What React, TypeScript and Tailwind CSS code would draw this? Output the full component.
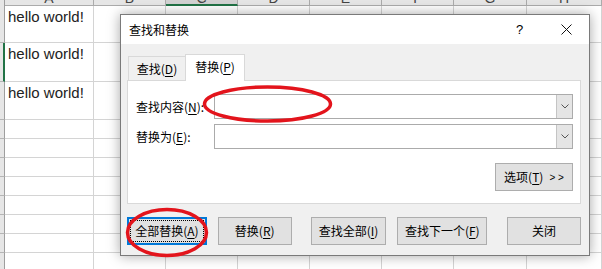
import React from "react";

const cjk = { fontFamily: '"Microsoft YaHei","Noto Sans CJK SC","Noto Sans",sans-serif' };

const cols = [
  { w: 89, l: "A" },
  { w: 72, l: "B" },
  { w: 72, l: "C", sel: true },
  { w: 72, l: "D" },
  { w: 72, l: "E" },
  { w: 72, l: "F" },
  { w: 73, l: "G" },
  { w: 75, l: "H" },
];
const rows = [37, 39, 38, 19, 19, 19, 19, 19, 19, 19, 19];
const texts = ["hello world!", "hello world!", "hello world!"];

function U({ c }: { c: string }) {
  return <span className="underline underline-offset-2">{c}</span>;
}

function Btn({ w, children, focus }: { w: number; children: React.ReactNode; focus?: boolean }) {
  if (focus) {
    return (
      <div className="h-[28px] border-2 border-[#0078d7] bg-[#e1e1e1] p-[1px]" style={{ width: w }}>
        <div className="w-full h-full border border-dotted border-black flex items-center justify-center text-[12px] text-black">
          {children}
        </div>
      </div>
    );
  }
  return (
    <div
      className="h-[28px] border border-[#adadad] bg-[#e1e1e1] flex items-center justify-center text-[12px] text-black"
      style={{ width: w }}
    >
      {children}
    </div>
  );
}

function Combo() {
  return (
    <div className="w-[359px] h-[25px] border border-[#ababab] bg-white flex justify-end">
      <div className="w-[16px] h-full bg-[#e5e5e5] border-l border-[#c4c4c4] flex items-center justify-center">
        <svg width="8" height="5" viewBox="0 0 8 5">
          <path d="M0.5 0.5 L4 4 L7.5 0.5" fill="none" stroke="#555" strokeWidth="1" />
        </svg>
      </div>
    </div>
  );
}

export default function App() {
  return (
    <div className="relative w-[602px] h-[269px] overflow-hidden bg-white" style={{ fontFamily: '"Liberation Sans",Arial,sans-serif' }}>
      {/* Spreadsheet */}
      <div className="flex flex-col">
        <div className="flex h-[6px] overflow-hidden">
          <div className="w-[5px] shrink-0 bg-[#e6e6e6] border-r border-[#9e9e9e]" />
          {cols.map((c) => (
            <div
              key={c.l}
              className={`shrink-0 h-[6px] border-r border-b relative overflow-hidden ${
                c.sel ? "bg-[#d2d2d2] border-b-2 border-b-[#217346] border-r-[#ababab]" : "bg-[#e6e6e6] border-[#ababab]"
              }`}
              style={{ width: c.w }}
            >
              <div className="absolute left-0 right-0 -top-[12px] text-center text-[14px] text-[#444]">{c.l}</div>
            </div>
          ))}
        </div>
        {rows.map((h, i) => (
          <div key={i} className="flex shrink-0" style={{ height: h }}>
            <div
              className={`w-[5px] shrink-0 bg-[#e6e6e6] border-b border-[#b5b5b5] ${
                i === 1 ? "border-r-2 border-r-[#217346]" : "border-r border-r-[#9e9e9e]"
              }`}
            />
            {cols.map((c, j) => (
              <div
                key={j}
                className="shrink-0 border-r border-b border-[#d4d4d4] text-[15px] text-[#222] pl-[3px] leading-[22px]"
                style={{ width: c.w }}
              >
                {j === 0 && texts[i] ? texts[i] : ""}
              </div>
            ))}
          </div>
        ))}
      </div>

      {/* Dialog */}
      <div
        className="absolute left-[120px] top-[14px] w-[470px] h-[242px] border border-[#7a7a7a] bg-[#f0f0f0] flex flex-col shadow-[0_0_12px_rgba(0,0,0,0.35)]"
        style={cjk}
      >
        <div className="h-[29px] bg-white flex items-center shrink-0">
          <div className="pl-[8px] text-[12px] text-black flex-1">查找和替换</div>
          <div className="text-[13px] text-black w-[12px] mr-[33px]" style={{ fontFamily: '"Liberation Sans",sans-serif' }}>?</div>
          <svg width="11" height="11" viewBox="0 0 11 11" className="mr-[17px]">
            <path d="M0.5 0.5 L10.5 10.5 M10.5 0.5 L0.5 10.5" stroke="#111" strokeWidth="1" />
          </svg>
        </div>
        <div className="flex-1 pl-[6px] pr-[8px] pt-[10px] flex flex-col">
          <div className="flex items-end h-[26px] pl-[1px]">
            <div className="w-[57px] h-[24px] border-t border-l border-[#d9d9d9] bg-[#f0f0f0] flex items-center justify-center text-[12px] text-black">
              查找(<U c="D" />)
            </div>
            <div className="w-[60px] h-[27px] -mb-px border-t border-l border-r border-[#d9d9d9] bg-white relative z-10 flex items-center justify-center text-[12px] text-black pb-[3px]">
              替换(<U c="P" />)
            </div>
          </div>
          <div className="h-[124px] border border-[#d9d9d9] bg-white pl-[8px] pr-[7px] pt-[13px] flex flex-col">
            <div className="flex items-center justify-between">
              <div className="text-[12px] text-black">
                查找内容(<U c="N" />):
              </div>
              <Combo />
            </div>
            <div className="flex items-center justify-between mt-[5px]">
              <div className="text-[12px] text-black">
                替换为(<U c="E" />):
              </div>
              <Combo />
            </div>
            <div className="flex justify-end mt-[14px]">
              <div className="w-[78px] h-[28px] border border-[#adadad] bg-[#e1e1e1] flex items-center justify-center text-[12px] text-black">
                选项(<U c="T" />)<span className="ml-[6px] text-[10px]" style={{ fontFamily: '"Liberation Sans",sans-serif' }}>&gt; &gt;</span>
              </div>
            </div>
          </div>
          <div className="flex mt-[13px]">
            <Btn w={80} focus>
              全部替换(<U c="A" />)
            </Btn>
            <div className="w-[11px]" />
            <Btn w={74}>
              替换(<U c="R" />)
            </Btn>
            <div className="w-[19px]" />
            <Btn w={76}>
              查找全部(<U c="I" />)
            </Btn>
            <div className="w-[11px]" />
            <Btn w={90}>
              查找下一个(<U c="F" />)
            </Btn>
            <div className="w-[20px]" />
            <Btn w={74}>关闭</Btn>
          </div>
        </div>
      </div>

      {/* Red annotations */}
      <svg className="absolute left-0 top-0 pointer-events-none" width="602" height="269">
        <ellipse cx="267.5" cy="104" rx="63" ry="17" fill="none" stroke="#e3141c" strokeWidth="3.5" />
        <ellipse cx="167" cy="232.5" rx="39.5" ry="23" fill="none" stroke="#e3141c" strokeWidth="3.5" />
      </svg>
    </div>
  );
}
